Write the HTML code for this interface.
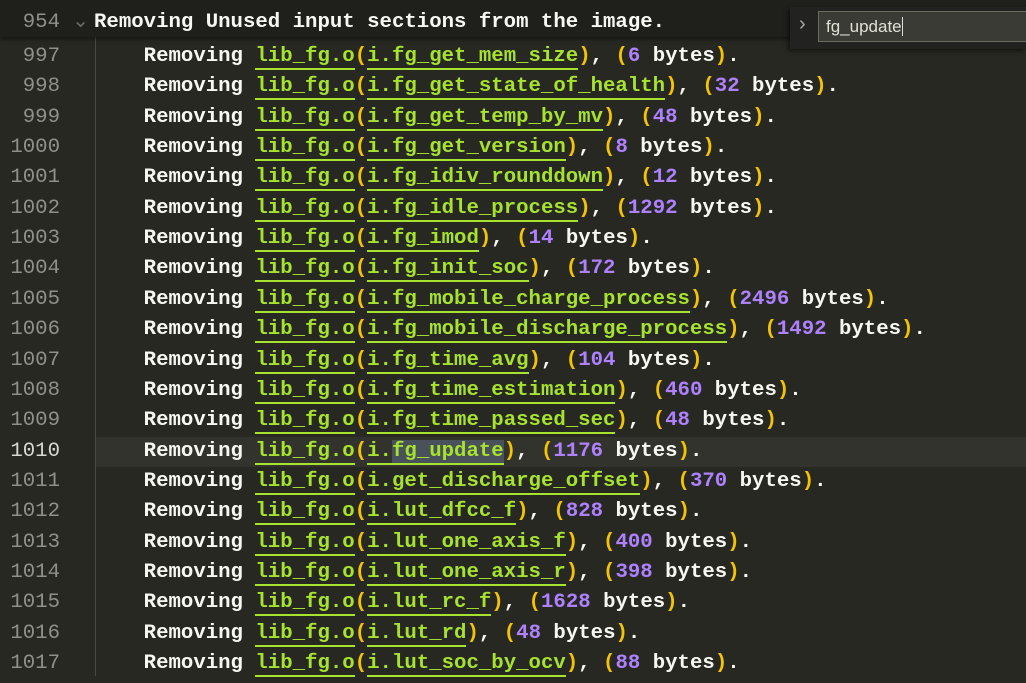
<!DOCTYPE html><html><head><meta charset="utf-8"><style>
body{margin:0;width:1026px;height:675px;overflow:hidden;background:#272822;font-family:"Liberation Mono",monospace;font-size:20.7px;font-weight:bold;color:#f8f8f2;position:relative}
.r{position:absolute;left:0;height:30px;line-height:30px;width:1026px;white-space:pre}
.n{position:absolute;left:0;width:60px;text-align:right;color:#8f908a;font-weight:normal}
.c{position:absolute;left:94px}
.g{color:#a6e22e;border-bottom:2px solid #a6e22e}
.p{color:#f5c400}
.m{color:#ae81ff}
.hl{background:#49515a}
.guide{position:absolute;left:95px;top:36px;width:1px;height:640px;background:#4a4a44}
#w{position:absolute;left:0;top:3px;width:1026px;height:680px}
</style></head><body>
<div class="guide"></div>
<div id="w">
<div class="r" style="top:39px"><span class="n">997</span><span class="c">    Removing <span class="g">lib_fg.o</span><span class="p">(</span><span class="g">i.fg_get_mem_size</span><span class="p">)</span>, <span class="p">(</span><span class="m">6</span> bytes<span class="p">)</span>.</span></div>
<div class="r" style="top:69px"><span class="n">998</span><span class="c">    Removing <span class="g">lib_fg.o</span><span class="p">(</span><span class="g">i.fg_get_state_of_health</span><span class="p">)</span>, <span class="p">(</span><span class="m">32</span> bytes<span class="p">)</span>.</span></div>
<div class="r" style="top:100px"><span class="n">999</span><span class="c">    Removing <span class="g">lib_fg.o</span><span class="p">(</span><span class="g">i.fg_get_temp_by_mv</span><span class="p">)</span>, <span class="p">(</span><span class="m">48</span> bytes<span class="p">)</span>.</span></div>
<div class="r" style="top:130px"><span class="n">1000</span><span class="c">    Removing <span class="g">lib_fg.o</span><span class="p">(</span><span class="g">i.fg_get_version</span><span class="p">)</span>, <span class="p">(</span><span class="m">8</span> bytes<span class="p">)</span>.</span></div>
<div class="r" style="top:160px"><span class="n">1001</span><span class="c">    Removing <span class="g">lib_fg.o</span><span class="p">(</span><span class="g">i.fg_idiv_rounddown</span><span class="p">)</span>, <span class="p">(</span><span class="m">12</span> bytes<span class="p">)</span>.</span></div>
<div class="r" style="top:191px"><span class="n">1002</span><span class="c">    Removing <span class="g">lib_fg.o</span><span class="p">(</span><span class="g">i.fg_idle_process</span><span class="p">)</span>, <span class="p">(</span><span class="m">1292</span> bytes<span class="p">)</span>.</span></div>
<div class="r" style="top:221px"><span class="n">1003</span><span class="c">    Removing <span class="g">lib_fg.o</span><span class="p">(</span><span class="g">i.fg_imod</span><span class="p">)</span>, <span class="p">(</span><span class="m">14</span> bytes<span class="p">)</span>.</span></div>
<div class="r" style="top:251px"><span class="n">1004</span><span class="c">    Removing <span class="g">lib_fg.o</span><span class="p">(</span><span class="g">i.fg_init_soc</span><span class="p">)</span>, <span class="p">(</span><span class="m">172</span> bytes<span class="p">)</span>.</span></div>
<div class="r" style="top:282px"><span class="n">1005</span><span class="c">    Removing <span class="g">lib_fg.o</span><span class="p">(</span><span class="g">i.fg_mobile_charge_process</span><span class="p">)</span>, <span class="p">(</span><span class="m">2496</span> bytes<span class="p">)</span>.</span></div>
<div class="r" style="top:312px"><span class="n">1006</span><span class="c">    Removing <span class="g">lib_fg.o</span><span class="p">(</span><span class="g">i.fg_mobile_discharge_process</span><span class="p">)</span>, <span class="p">(</span><span class="m">1492</span> bytes<span class="p">)</span>.</span></div>
<div class="r" style="top:343px"><span class="n">1007</span><span class="c">    Removing <span class="g">lib_fg.o</span><span class="p">(</span><span class="g">i.fg_time_avg</span><span class="p">)</span>, <span class="p">(</span><span class="m">104</span> bytes<span class="p">)</span>.</span></div>
<div class="r" style="top:373px"><span class="n">1008</span><span class="c">    Removing <span class="g">lib_fg.o</span><span class="p">(</span><span class="g">i.fg_time_estimation</span><span class="p">)</span>, <span class="p">(</span><span class="m">460</span> bytes<span class="p">)</span>.</span></div>
<div class="r" style="top:403px"><span class="n">1009</span><span class="c">    Removing <span class="g">lib_fg.o</span><span class="p">(</span><span class="g">i.fg_time_passed_sec</span><span class="p">)</span>, <span class="p">(</span><span class="m">48</span> bytes<span class="p">)</span>.</span></div>
<div class="r" style="top:434px"><div style="position:absolute;left:96px;right:0;top:0;bottom:0;background:#32332d"></div><span class="n" style="color:#d8d8d0">1010</span><span class="c">    Removing <span class="g">lib_fg.o</span><span class="p">(</span><span class="g">i.<span class="hl">fg_update</span></span><span class="p">)</span>, <span class="p">(</span><span class="m">1176</span> bytes<span class="p">)</span>.</span></div>
<div class="r" style="top:464px"><span class="n">1011</span><span class="c">    Removing <span class="g">lib_fg.o</span><span class="p">(</span><span class="g">i.get_discharge_offset</span><span class="p">)</span>, <span class="p">(</span><span class="m">370</span> bytes<span class="p">)</span>.</span></div>
<div class="r" style="top:494px"><span class="n">1012</span><span class="c">    Removing <span class="g">lib_fg.o</span><span class="p">(</span><span class="g">i.lut_dfcc_f</span><span class="p">)</span>, <span class="p">(</span><span class="m">828</span> bytes<span class="p">)</span>.</span></div>
<div class="r" style="top:525px"><span class="n">1013</span><span class="c">    Removing <span class="g">lib_fg.o</span><span class="p">(</span><span class="g">i.lut_one_axis_f</span><span class="p">)</span>, <span class="p">(</span><span class="m">400</span> bytes<span class="p">)</span>.</span></div>
<div class="r" style="top:555px"><span class="n">1014</span><span class="c">    Removing <span class="g">lib_fg.o</span><span class="p">(</span><span class="g">i.lut_one_axis_r</span><span class="p">)</span>, <span class="p">(</span><span class="m">398</span> bytes<span class="p">)</span>.</span></div>
<div class="r" style="top:585px"><span class="n">1015</span><span class="c">    Removing <span class="g">lib_fg.o</span><span class="p">(</span><span class="g">i.lut_rc_f</span><span class="p">)</span>, <span class="p">(</span><span class="m">1628</span> bytes<span class="p">)</span>.</span></div>
<div class="r" style="top:616px"><span class="n">1016</span><span class="c">    Removing <span class="g">lib_fg.o</span><span class="p">(</span><span class="g">i.lut_rd</span><span class="p">)</span>, <span class="p">(</span><span class="m">48</span> bytes<span class="p">)</span>.</span></div>
<div class="r" style="top:646px"><span class="n">1017</span><span class="c">    Removing <span class="g">lib_fg.o</span><span class="p">(</span><span class="g">i.lut_soc_by_ocv</span><span class="p">)</span>, <span class="p">(</span><span class="m">88</span> bytes<span class="p">)</span>.</span></div>
</div>
<div style="position:absolute;top:0;left:0;width:1026px;height:37px;background:#1f201c;box-shadow:0 2px 4px rgba(0,0,0,.5)">
<div class="r" style="top:8px"><span class="n">954</span><span style="position:absolute;left:72px;color:#6a6a62;font-weight:normal">⌄</span><span class="c">Removing Unused input sections from the image.</span></div>
</div>
<div style="position:absolute;left:790px;top:7px;width:236px;height:42px;background:#222320;box-shadow:-2px 2px 4px rgba(0,0,0,.5)">
<span style="position:absolute;left:9px;top:6px;color:#aaa;font-family:'Liberation Sans',sans-serif;font-weight:normal;font-size:20px">›</span>
<div style="position:absolute;left:28px;top:4px;width:210px;height:31px;border:1px solid #6c6c60;background:#3a3b34;box-sizing:border-box;font-family:'Liberation Sans',sans-serif;font-weight:normal;font-size:17px;color:#e0e0d8;line-height:29px;padding-left:7px">fg_update<span style="border-left:1px solid #ddd"></span></div>
</div>
</body></html>
